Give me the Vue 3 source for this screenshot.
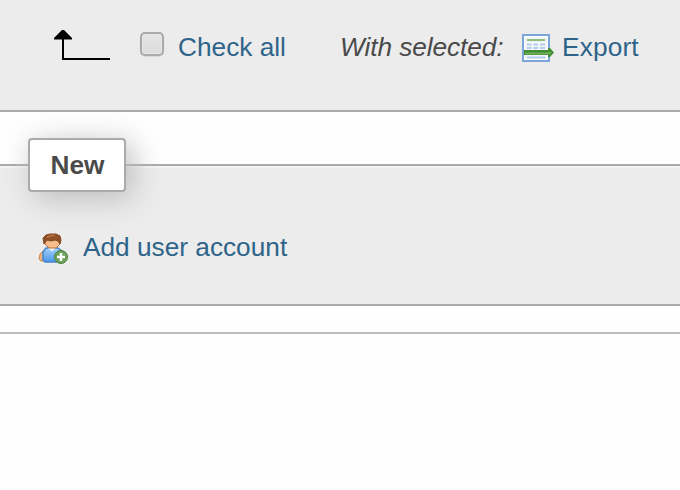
<script setup>
</script>

<template>
  <main class="page">
    <section class="selection">
      <svg class="arrow" width="60" height="34" viewBox="0 0 60 34">
        <path d="M9 8V31H56" fill="none" stroke="#000" stroke-width="2" />
        <path d="M0 11.5V10L8 2H10L18 10V11.5Z" fill="#000" />
      </svg>
      <span class="checkbox"></span>
      <a class="check-all">Check all</a>
      <em class="with">With selected:</em>
      <svg class="export-icon" width="32" height="32" viewBox="0 0 32 32">
        <rect x="1" y="2" width="26" height="26" fill="#fff" stroke="#7ba5d8" stroke-width="2" />
        <rect x="3" y="4" width="22" height="22" fill="#eff5fb" />
        <path d="M5 7H23" stroke="#8fbd78" stroke-width="2" />
        <path d="M5 11.5H23M5 15H23M5 24.5H23" stroke="#b5cfeb" stroke-width="2" />
        <path d="M10.5 10V17M17 10V17" stroke="#fff" stroke-width="1.5" />
        <path d="M2 17H26V15H28L32 19.5L28 24H26V22H2Z" fill="#3f8b32" />
        <path d="M3 20.5H26L29 19.5" fill="none" stroke="#71ae5a" stroke-width="2" />
      </svg>
      <a class="export">Export</a>
    </section>

    <section class="new-group">
      <div class="legend">New</div>
      <div class="action">
        <svg class="user-icon" width="32" height="32" viewBox="0 0 32 32">
          <defs>
            <linearGradient id="shirt" x1="0" y1="0" x2="0" y2="1">
              <stop offset="0" stop-color="#a5d0fa" />
              <stop offset="1" stop-color="#4a98e8" />
            </linearGradient>
          </defs>
          <path d="M5 18L2 21L1 26L3 28H6V23Z" fill="#efb27c" stroke="#cf8850" />
          <path d="M8 15H20L25 19L26 27L22 29H7L5 27V19Z" fill="url(#shirt)" stroke="#4684c9" stroke-width="1.5" />
          <path d="M10 15L14 18.5L18 15" fill="#e9f5ff" />
          <path d="M7 6H22V11L18 15H11L7 11Z" fill="#f5bd8b" stroke="#b86c3c" />
          <path d="M6 11L5 5L8 2L12 1H18L22 3L23 7L22 11L20 8L17 7L13 8L9 7Z" fill="#915027" stroke="#804723" />
          <path d="M9 4L13 2.5H17" fill="none" stroke="#b27041" stroke-width="2" />
          <circle cx="23" cy="24" r="6.5" fill="#6aa158" stroke="#4d803c" />
          <path d="M23 20V28M19 24H27" stroke="#fff" stroke-width="2.5" />
        </svg>
        <a>Add user account</a>
      </div>
    </section>
    <div class="rule"></div>
  </main>
</template>

<style>
body {
  background: #fefefe;
}
</style>

<style scoped>
.page {
  height: 490px;
  overflow: hidden;
  font: 26.24px/30px "Liberation Sans", Arial, sans-serif;
  color: #4a4a4a;
}
.selection {
  display: flex;
  align-items: flex-start;
  box-sizing: border-box;
  height: 112px;
  padding: 29px 0 0 54px;
  background: #ececec;
  border-bottom: 2px solid #aaa;
  white-space: nowrap;
}
.selection > * {
  flex: none;
}
a {
  color: #2f648a;
}
.arrow {
  margin-top: -1px;
}
.checkbox {
  box-sizing: border-box;
  width: 24px;
  height: 24px;
  margin: 3px 0 0 26px;
  border: 2px solid #aaa;
  border-radius: 5px;
  background: linear-gradient(#e5e5e5, #dcdcdc);
  box-shadow: inset 0 0 0 1px #e8e8e8, 0 1px 1px #d8d8d8;
}
.check-all {
  width: 108px;
  margin: 3px 0 0 14px;
}
.with {
  width: 164px;
  margin: 3px 0 0 54px;
  letter-spacing: -0.08px;
}
.export-icon {
  margin: 4px 0 0 18px;
}
.export {
  margin: 3px 0 0 8px;
  letter-spacing: 0.15px;
}
.new-group {
  box-sizing: border-box;
  height: 142px;
  margin-top: 52px;
  padding-left: 28px;
  background: #ececec;
  border-top: 2px solid #aaa;
  border-bottom: 2px solid #aaa;
  box-shadow: inset 0 2px 1px #f4f4f4;
}
.legend {
  position: relative;
  top: -28px;
  box-sizing: border-box;
  width: 98px;
  height: 54px;
  padding-left: 1px;
  border: 2px solid #aaa;
  border-radius: 4px;
  background: #fff;
  box-shadow: 6px 6px 30px #bbb;
  font-weight: bold;
  line-height: 50px;
  text-align: center;
}
.action {
  display: flex;
  align-items: flex-start;
  gap: 13px;
  margin: 13px 0 0 10px;
}
.action a {
  line-height: 28px;
}
.rule {
  height: 2px;
  margin-top: 26px;
  background: #bbb;
}
</style>
